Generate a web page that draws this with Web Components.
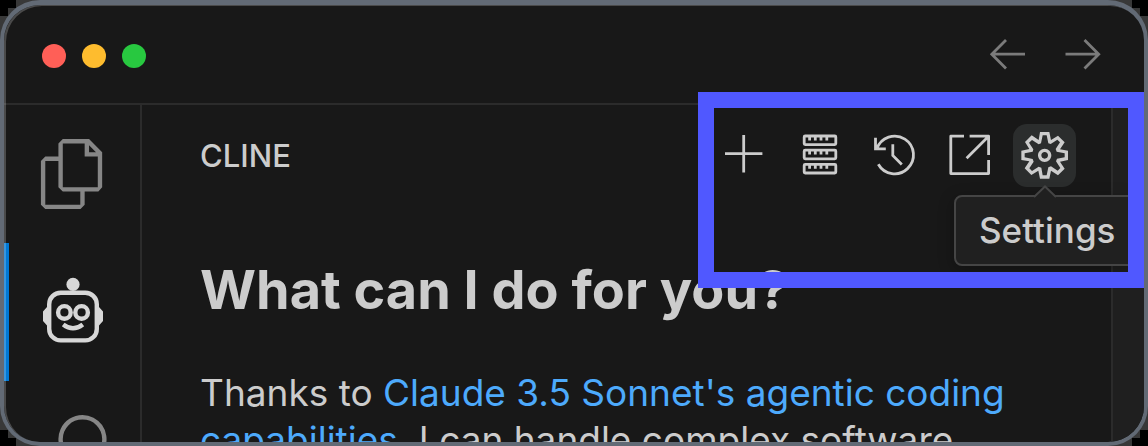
<!DOCTYPE html>
<html lang="en">
<head>
<meta charset="utf-8">
<title>Cline</title>
<style>
  html, body { height: 100%; margin: 0; }
  body {
    overflow: hidden;
    font-family: Inter, "Liberation Sans", sans-serif;
    color: #cccccc;
    background:
      linear-gradient(#000, #000) 0 0 / 16px 8px no-repeat,
      linear-gradient(#000, #000) 0 0 / 8px 16px no-repeat,
      linear-gradient(#000, #000) 100% 0 / 16px 8px no-repeat,
      linear-gradient(#000, #000) 100% 0 / 8px 16px no-repeat,
      linear-gradient(#000, #000) 0 100% / 16px 8px no-repeat,
      linear-gradient(#000, #000) 0 100% / 8px 16px no-repeat,
      linear-gradient(#000, #000) 100% 100% / 16px 8px no-repeat,
      linear-gradient(#000, #000) 100% 100% / 8px 16px no-repeat,
      #383838;
  }
</style>
</head>
<body>
<app-window>
  <title-bar slot="title"></title-bar>
  <activity-bar slot="activity"></activity-bar>
  <side-panel slot="panel">
    <span slot="name">CLINE</span>
    <panel-toolbar slot="actions"></panel-toolbar>
    <welcome-text></welcome-text>
  </side-panel>
</app-window>

<script>
const define = (name, html) => {
  const template = document.createElement('template');
  template.innerHTML = html;
  customElements.define(name, class extends HTMLElement {
    constructor() {
      super();
      this.attachShadow({ mode: 'open' }).append(template.content.cloneNode(true));
    }
  });
};

define('app-window', `
<style>
  :host {
    display: flex; flex-direction: column; position: relative;
    box-sizing: border-box; height: 100vh; overflow: hidden;
    border: 4px solid #626a75; border-top-width: 5px; border-radius: 40px;
    background: #181818;
  }
  .body { display: flex; flex: 1; min-height: 0; }
  .editor { flex: none; width: 31px; background: #1f1f1f; }
  ::slotted([slot=panel]) { flex: 1; min-width: 0; }
  .edge {
    position: absolute; inset: 0; pointer-events: none; border-radius: 36px;
    box-shadow: inset 2px 1px 0 rgba(255,255,255,.22);
  }
  .highlight {
    position: absolute; top: 87px; right: 0; width: 446px; height: 196px;
    box-sizing: border-box; border: 16px solid #5058ff; pointer-events: none;
  }
</style>
<slot name="title"></slot>
<div class="body">
  <slot name="activity"></slot>
  <slot name="panel"></slot>
  <div class="editor"></div>
</div>
<div class="edge"></div>
<div class="highlight"></div>
`);

define('title-bar', `
<style>
  :host {
    display: flex; flex: none; justify-content: space-between; align-items: center;
    box-sizing: border-box; height: 100px; padding: 0 37px 0 38px;
    border-bottom: 2px solid #2b2b2b;
  }
  div, nav { display: flex; }
  div { gap: 16px; padding-top: 4px; }
  nav { gap: 27px; }
  button { border: 0; padding: 0; background: none; }
  .light { width: 24px; height: 24px; border-radius: 50%; }
  .close { background: #ff5f57; }
  .min { background: #febc2e; }
  .max { background: #28c840; }
  svg { display: block; width: 48px; height: 48px; fill: none; stroke: #7b7b7b; stroke-width: 2.8; }
</style>
<div>
  <button class="light close" aria-label="Close"></button>
  <button class="light min" aria-label="Minimize"></button>
  <button class="light max" aria-label="Zoom"></button>
</div>
<nav>
  <button aria-label="Back"><svg viewBox="0 0 48 48"><path d="M41 24.2H8M22 10L7.8 24.2L22 38.4"/></svg></button>
  <button aria-label="Forward"><svg viewBox="0 0 48 48"><path d="M6.5 24.2H39.5M25.5 10L39.7 24.2L25.5 38.4"/></svg></button>
</nav>
`);

define('activity-bar', `
<style>
  :host { display: flex; flex-direction: column; flex: none; width: 136px; border-right: 2px solid #2b2b2b; }
  button {
    flex: none; display: flex; justify-content: center; align-items: center;
    height: 138px; padding: 0 0 0 2px; border: 0; background: none; color: #868686;
  }
  button.active { color: #d7d7d7; box-shadow: inset 5px 0 #0078d4; }
  svg { width: 70px; height: 70px; fill: currentColor; }
  .line { fill: none; stroke: currentColor; stroke-width: 4.4; }
</style>
<button aria-label="Explorer"><svg viewBox="0 0 24 24"><path d="M17.5 0h-9L7 1.5V6H2.5L1 7.5v15.07L2.5 24h12.07L16 22.57V18h4.7l1.3-1.43V4.5L17.5 0zm0 2.12l2.38 2.38H17.5V2.12zm-3 20.38h-12v-15H7v9.07L8.5 18h6v4.5zm6-6h-12v-15H16V6h4.5v10.5z"/></svg></button>
<button class="active" aria-label="Cline"><svg viewBox="0 0 70 70">
  <circle cx="35" cy="7.4" r="6.6"/>
  <path d="M11 27L9 30L5 34.5V44L9 48.5L11 51ZM59 27L61 30L65 34.5V44L61 48.5L59 51Z"/>
  <rect class="line" x="11.2" y="15.8" width="47.6" height="47.6" rx="11.5"/>
  <circle class="line" cx="26.4" cy="35.4" r="6.3"/>
  <circle class="line" cx="43.6" cy="35.4" r="6.3"/>
  <path class="line" stroke-width="4" d="M25.2 47.4Q35 55 44.8 47.4"/>
</svg></button>
<button aria-label="Search"><svg viewBox="0 0 24 24"><path d="M15.25 0a8.25 8.25 0 0 0-6.18 13.72L1 22.88l1.12 1 8.05-9.12A8.251 8.251 0 1 0 15.25.01V0zm0 15a6.75 6.75 0 1 1 0-13.5 6.75 6.75 0 0 1 0 13.5z"/></svg></button>
`);

define('side-panel', `
<style>
  :host { display: block; border-right: 2px solid #2b2b2b; }
  header {
    display: flex; align-items: center; justify-content: space-between;
    height: 101px; padding: 0 35px 0 58px; font-size: 31px; line-height: 40px; font-weight: 500;
  }
  main { padding: 0 58px; }
</style>
<header><slot name="name"></slot><slot name="actions"></slot></header>
<main><slot></slot></main>
`);

define('panel-toolbar', `
<style>
  :host { display: flex; gap: 12px; }
  button {
    display: flex; justify-content: center; align-items: center;
    width: 63px; height: 63px; padding: 0; border: 0; border-radius: 14px;
    background: none; color: #cccccc;
  }
  svg { width: 48px; height: 48px; fill: none; stroke: currentColor; stroke-width: 2.8; }
  .gear { fill: currentColor; stroke: none; }
  .item { position: relative; }
  .item button { background: #2b2d2d; }
  [role=tooltip] {
    position: absolute; top: 71px; left: -59px;
    padding: 12px 23px; border: 2px solid #454545; border-radius: 8px;
    background: #202020; box-shadow: 0 4px 16px rgba(0,0,0,.3);
    font-size: 35px; line-height: 43px; white-space: nowrap;
  }
  .tip {
    position: absolute; top: -12px; left: 77px; width: 24px; height: 13px;
    fill: #202020; stroke: #454545; stroke-width: 2;
  }
</style>
<button aria-label="New Task"><svg viewBox="0 0 48 48"><path d="M22.7 3V40.4M4 21.7H41.4"/></svg></button>
<button aria-label="MCP Servers"><svg viewBox="1 1 48 48">
  <rect x="9.2" y="5" width="31.6" height="8.6" rx="1"/>
  <rect x="9.2" y="19.2" width="31.6" height="8.6" rx="1"/>
  <rect x="9.2" y="33.4" width="31.6" height="8.6" rx="1"/>
  <path d="M14.6 5v4.4M20.3 5v4.4M26 5v4.4M31.8 5v4.4M14.6 19.2v4.4M20.3 19.2v4.4M26 19.2v4.4M31.8 19.2v4.4M14.6 33.4v4.4M20.3 33.4v4.4M26 33.4v4.4M31.8 33.4v4.4"/>
</svg></button>
<button aria-label="History"><svg viewBox="1 0 48 48"><path d="M5.5 5.8V16.8H15.8M6.9 16.8A18.8 18.8 0 1 1 8.3 32.2M22.8 12.2V23.5L31.8 32.4"/></svg></button>
<button aria-label="Open in Editor"><svg viewBox="0 0 48 48"><path stroke-linejoin="round" d="M18 4.2H4.8V41.6H42.6V28M23.6 4.2H42.6V23M20.6 26.2L42.4 4.4"/></svg></button>
<div class="item">
  <button aria-label="Settings"><svg class="gear" viewBox="0.9 1 14.4 14.4"><path d="M9.1 4.4L8.6 2H7.4l-.5 2.4-.7.3-2-1.3-.9.8 1.3 2-.2.7-2.4.5v1.2l2.4.5.3.8-1.3 2 .8.8 2-1.3.8.3.4 2.3h1.2l.5-2.4.8-.3 2 1.3.8-.8-1.3-2 .3-.8 2.3-.4V7.4l-2.4-.5-.3-.8 1.3-2-.8-.8-2 1.3-.7-.2zM9.4 1l.5 2.4L12 2.1l2 2-1.4 2.1 2.4.4v2.8l-2.4.5L14 12l-2 2-2.1-1.4-.5 2.4H6.6l-.5-2.4L4 13.9l-2-2 1.4-2.1L1 9.4V6.6l2.4-.5L2.1 4l2-2 2.1 1.4.4-2.4h2.8zm.6 7c0 1.1-.9 2-2 2s-2-.9-2-2 .9-2 2-2 2 .9 2 2zM8 9c.6 0 1-.4 1-1s-.4-1-1-1-1 .4-1 1 .4 1 1 1z"/></svg></button>
  <div role="tooltip"><svg class="tip" viewBox="0 0 24 13"><path stroke="none" d="M1 13L12 1.5L23 13Z"/><path fill="none" d="M1 12L12 1.5L23 12"/></svg>Settings</div>
</div>
`);

define('welcome-text', `
<style>
  :host { display: block; }
  h1 { margin: 0; padding: 49px 0 44px; font-size: 54px; line-height: 70px; font-weight: 700; }
  p { margin: 0; font-size: 37px; line-height: 47px; }
  a { color: #4daafc; text-decoration: none; }
</style>
<h1>What can I do for you?</h1>
<p>Thanks to <a href="#">Claude 3.5 Sonnet's agentic coding capabilities,</a> I can handle complex software</p>
`);
</script>
</body>
</html>
